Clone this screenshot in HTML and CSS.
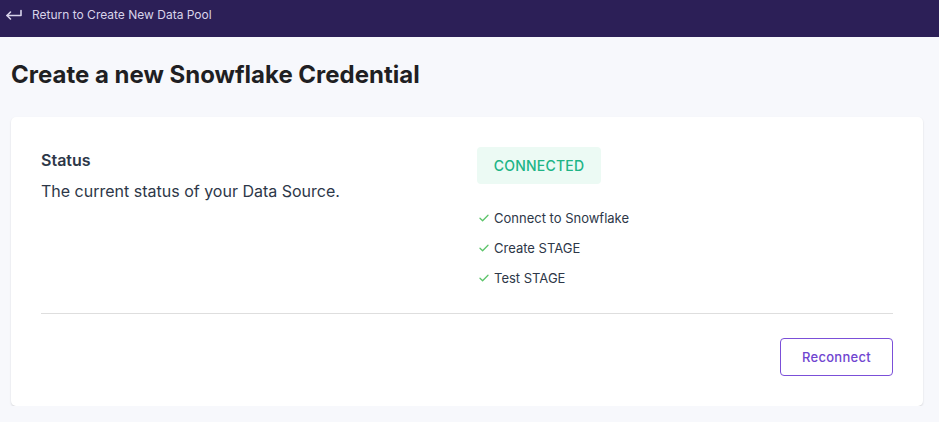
FILE: index.html
```html
<!DOCTYPE html>
<html lang="en">
<head>
<meta charset="utf-8">
<title>Create a new Snowflake Credential</title>
<link rel="stylesheet" href="styles.css">
</head>
<body>
<header class="topbar">
  <a class="back" href="#">
    <svg class="back-icon" width="18" height="12" viewBox="0 0 18 12" fill="none" stroke="currentColor" stroke-width="1.6" stroke-linecap="round" stroke-linejoin="round">
      <path d="M16 1.5v5H2"/>
      <path d="M5.5 3L2 6.5 5.5 10"/>
    </svg>
    <span>Return to Create New Data Pool</span>
  </a>
</header>
<main class="page">
  <h1 class="title">Create a new Snowflake Credential</h1>
  <section class="card">
    <div class="cols">
      <div class="col-left">
        <h2 class="label">Status</h2>
        <p class="desc">The current status of your Data Source.</p>
      </div>
      <div class="col-right">
        <div class="badge">CONNECTED</div>
        <ul class="steps">
          <li class="step"><svg class="check" width="10" height="8" viewBox="0 0 10 8" fill="none" stroke="currentColor" stroke-width="1.3" stroke-linecap="round" stroke-linejoin="round"><path d="M1 4.2l2.6 2.6L9 1.2"/></svg><span>Connect to Snowflake</span></li>
          <li class="step"><svg class="check" width="10" height="8" viewBox="0 0 10 8" fill="none" stroke="currentColor" stroke-width="1.3" stroke-linecap="round" stroke-linejoin="round"><path d="M1 4.2l2.6 2.6L9 1.2"/></svg><span>Create STAGE</span></li>
          <li class="step"><svg class="check" width="10" height="8" viewBox="0 0 10 8" fill="none" stroke="currentColor" stroke-width="1.3" stroke-linecap="round" stroke-linejoin="round"><path d="M1 4.2l2.6 2.6L9 1.2"/></svg><span>Test STAGE</span></li>
        </ul>
      </div>
    </div>
    <hr class="divider">
    <div class="actions">
      <button class="btn" type="button">Reconnect</button>
    </div>
  </section>
</main>
</body>
</html>
```
FILE: styles.css
```css
* { box-sizing: border-box; }
html, body { margin: 0; padding: 0; }
body {
  background: #f7f8fc;
  font-family: Inter, "Noto Sans", sans-serif;
  color: #2d3748;
}
.topbar {
  height: 37px;
  background: #2c1f57;
  padding: 6px 0 0 5px;
}
.back {
  display: flex;
  align-items: center;
  gap: 9px;
  color: #d8d3ea;
  text-decoration: none;
  font-size: 12px;
  line-height: 18px;
}
.back-icon { display: block; color: #d8d3ea; }
.page { padding: 0 16px 0 11px; }
.title {
  margin: 23px 0 0;
  font-size: 24px;
  line-height: 30px;
  font-weight: 700;
  color: #1f1f23;
}
.card {
  margin-top: 27px;
  background: #fff;
  border-radius: 5px;
  box-shadow: 0 1px 2px rgba(0,0,0,0.14);
  padding: 30px 30px 30px 30px;
}
.cols {
  display: grid;
  grid-template-columns: 1fr 1fr;
  gap: 20px;
}
.label {
  margin: 2px 0 0;
  font-size: 16px;
  line-height: 22px;
  font-weight: 600;
  color: #2d3748;
}
.desc {
  margin: 10px 0 0;
  font-size: 16px;
  line-height: 20px;
  color: #2d3748;
}
.badge {
  display: inline-flex;
  align-items: center;
  justify-content: center;
  height: 37px;
  width: 124px;
  background: #ecfaf4;
  color: #20b486;
  border-radius: 4px;
  font-size: 14px;
  font-weight: 500;
  letter-spacing: 0.2px;
}
.steps {
  list-style: none;
  margin: 25px 0 0;
  padding: 0 0 0 2px;
  display: flex;
  flex-direction: column;
  gap: 12px;
}
.step {
  display: flex;
  align-items: center;
  gap: 5px;
  font-size: 13px;
  line-height: 18px;
  color: #2d3748;
}
.check { color: #5cc46a; display: block; }
.divider {
  margin: 26px 0 0;
  border: 0;
  border-top: 1px solid #dedede;
}
.actions {
  display: flex;
  justify-content: flex-end;
  margin-top: 24px;
}
.btn {
  width: 113px;
  height: 38px;
  background: #fff;
  border: 1px solid #7b4fd8;
  border-radius: 4px;
  color: #6f45d0;
  font-family: Inter, "Noto Sans", sans-serif;
  font-size: 13px;
  font-weight: 500;
  letter-spacing: 0.3px;
  cursor: pointer;
}
```
